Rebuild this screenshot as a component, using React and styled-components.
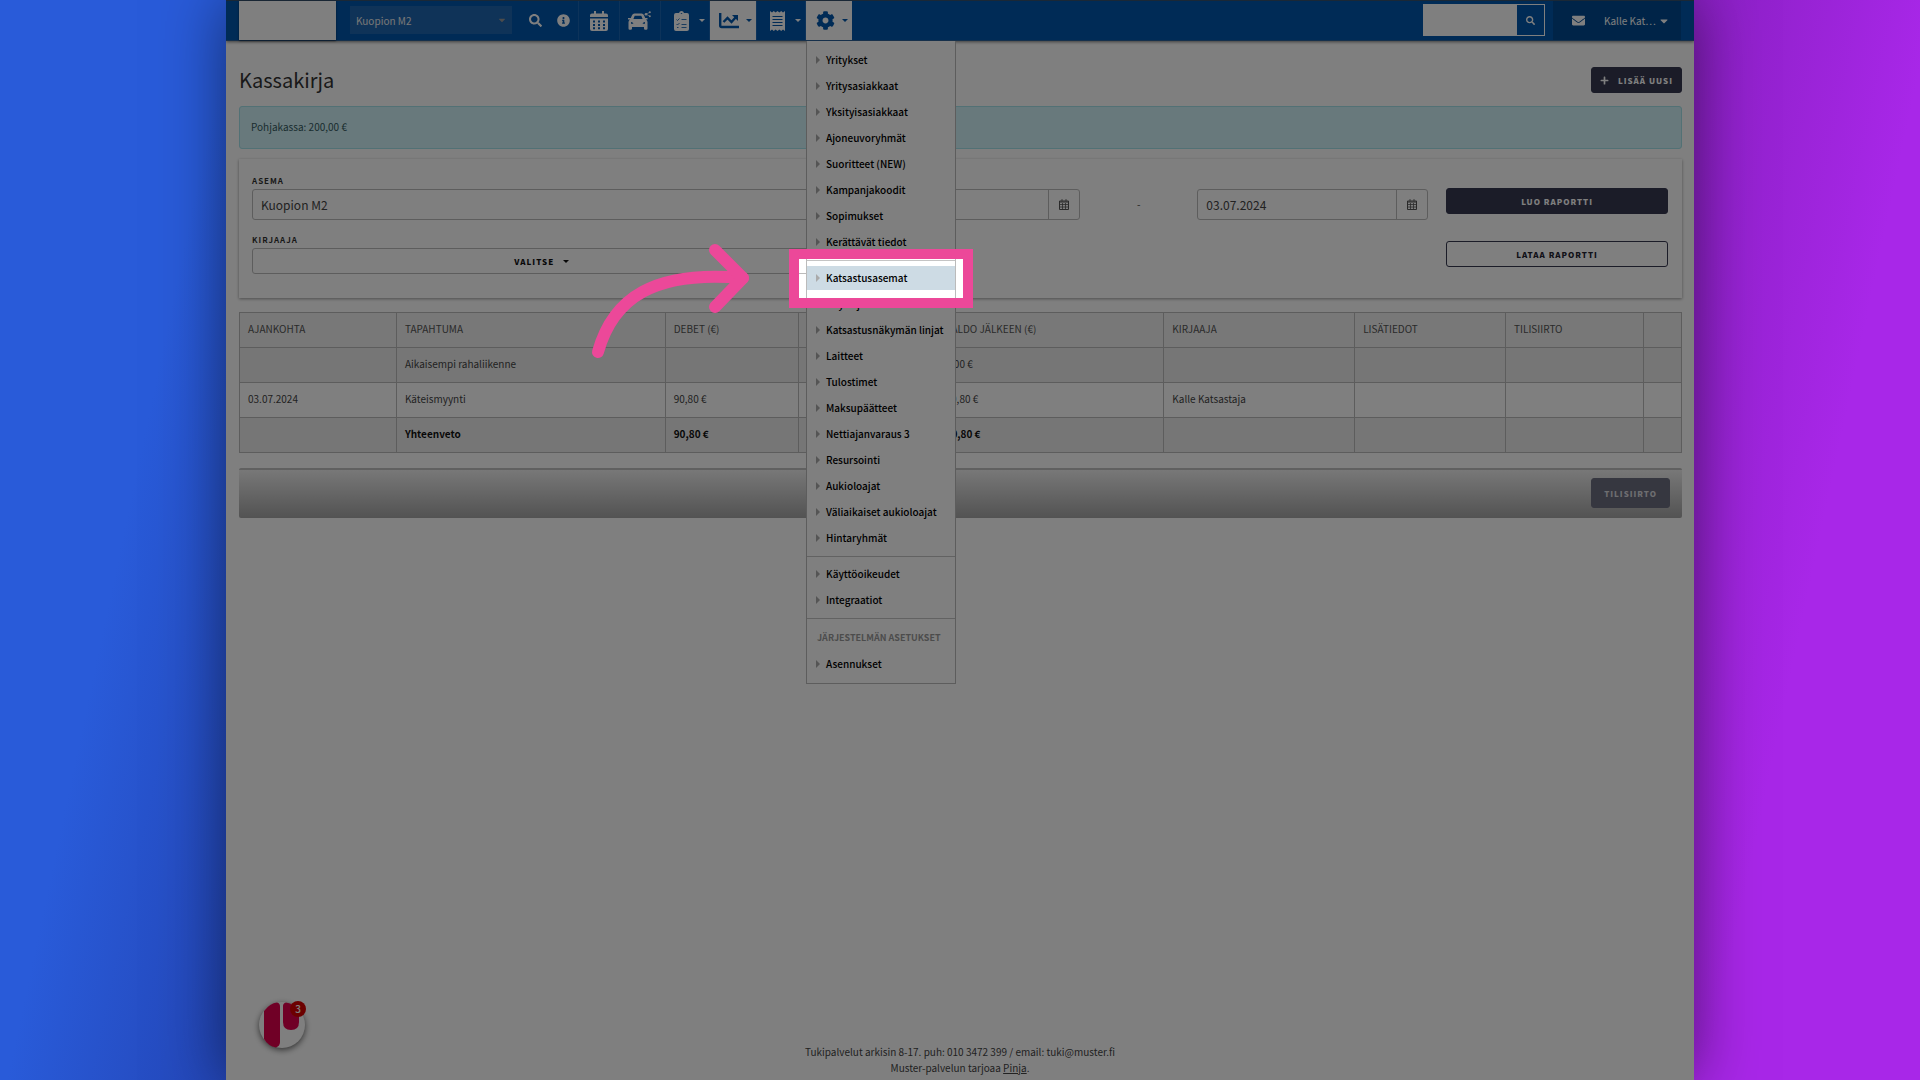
import { useId } from "react";
import styled, { createGlobalStyle, css } from "styled-components";
import {
  FaCaretDown,
  FaCog,
  FaEnvelope,
  FaInfoCircle,
  FaPlus,
  FaSearch,
} from "react-icons/fa";

const GlobalStyle = createGlobalStyle`
  *, *::before, *::after {
    box-sizing: border-box;
  }

  body {
    margin: 0;
    font-family: "Noto Sans CJK JP", "Open Sans", sans-serif;
    font-size: 10px;
    line-height: 16px;
    color: #444;
  }

  button, input, select {
    font-family: inherit;
  }
`;

const Backdrop = styled.div`
  min-height: 100vh;
  display: flex;
  padding: 0 226px;
  overflow: hidden;
  background: linear-gradient(102deg, #295bd9 11%, #2344b4 22%, #8a20c4 79%, #a827e8 90%);
`;

const Shade = styled.div`
  flex: 1;
  min-width: 0;
  display: flex;
  box-shadow: 0 0 60px rgba(0, 0, 0, 0.5);
`;

const Frame = styled.div`
  position: relative;
  flex: 1;
  min-width: 0;
  display: flex;
  flex-direction: column;
  overflow: hidden;
  background: #fff;
`;

const Navbar = styled.header`
  display: flex;
  height: 41px;
  padding: 0 13px;
  background: #0056ac;
  border-top: 1px solid #34506c;
  border-bottom: 1px solid #2c6096;
  box-shadow: 0 1px 3px rgba(0, 0, 0, 0.5);
`;

const Logo = styled.div`
  width: 97px;
  margin-right: 14px;
  background: #fff;
  box-shadow: 0 1px 2px rgba(0, 0, 0, 0.5);
`;

const StationPicker = styled.div`
  position: relative;
  width: 162px;
  height: 28px;
  margin: 5px 10px 0 0;

  select {
    appearance: none;
    width: 100%;
    height: 28px;
    padding: 0 6px;
    border: 0;
    background: #1e66b0;
    color: #eee;
    font-size: 10px;
  }

  svg {
    position: absolute;
    right: 5px;
    top: 9px;
    color: #999;
  }
`;

const IconButton = styled.button`
  display: flex;
  align-items: center;
  justify-content: center;
  width: ${({ $width }) => $width}px;
  padding: 0;
  border: 0;
  background: none;
  color: #fff;
`;

const NavItem = styled(IconButton)`
  border-left: 1px solid #1a66b4;

  ${({ $menu }) =>
    $menu &&
    css`
      justify-content: flex-end;
      gap: 10px;
      padding-right: 4px;
    `}

  ${({ $active }) =>
    $active &&
    css`
      gap: 7px;
      background: #fff;
      color: #0056ac;
    `}
`;

const Triangle = styled.span`
  border: 3px solid transparent;
  border-top-color: currentColor;
  border-bottom: 0;
`;

const SearchForm = styled.form`
  display: flex;
  width: 122px;
  height: 32px;
  margin: 3px 8px 0 auto;
  border: 1px solid #fff;

  input {
    flex: 1;
    min-width: 0;
    border: 0;
    padding: 0 6px;
    background: #fff;
  }
`;

const UserArea = styled.div`
  display: flex;
  align-items: center;
  width: 128px;
  padding-left: 19px;
  background: #004890;
  color: #fff;
`;

const UserButton = styled.button`
  display: flex;
  align-items: center;
  gap: 2px;
  margin-left: 19px;
  padding: 0;
  border: 0;
  background: none;
  color: #fff;
  font-size: 10px;
`;

const Content = styled.main`
  flex: 1;
  padding: 26px 12px 0 13px;
`;

const TitleRow = styled.div`
  display: flex;
  align-items: center;
  justify-content: space-between;
  height: 26px;
  margin-bottom: 13px;
`;

const Title = styled.h1`
  margin: 0;
  font-size: 20px;
  line-height: 26px;
  font-weight: 400;
  color: #333;
`;

const Button = styled.button`
  display: flex;
  align-items: center;
  justify-content: center;
  gap: 9px;
  height: ${({ $tall }) => ($tall ? 30 : 26)}px;
  padding: 0 ${({ $tall }) => ($tall ? 12 : 8)}px;
  border: 1px solid #363850;
  border-radius: 3px;
  background: ${({ $outline }) => ($outline ? "#fff" : "#363850")};
  color: ${({ $outline }) => ($outline ? "#222230" : "#fff")};
  font-size: 8px;
  font-weight: 900;
  letter-spacing: 1px;
  white-space: nowrap;

  &:disabled {
    border-color: #6c6e80;
    background: #6c6e80;
    color: #dcdce0;
  }
`;

const Alert = styled.div`
  padding: 11px 11px 13px;
  border: 1px solid #a4e2ea;
  border-radius: 3px;
  background: #d0f2f8;
  color: #355a60;
  line-height: 17px;
`;

const Filters = styled.form`
  display: grid;
  grid-template-columns: 580fr 231fr 81px 231fr 222fr;
  column-gap: 18px;
  row-gap: 12px;
  margin-top: 10px;
  padding: 14px 14px 24px 13px;
  box-shadow: 0 1px 3px rgba(0, 0, 0, 0.4);
`;

const Field = styled.div`
  display: flex;
  flex-direction: column;

  label {
    height: 16px;
    color: #333;
    font-size: 8px;
    font-weight: 700;
    letter-spacing: 1px;
  }
`;

const controlBorder = css`
  border: 1px solid #bbb;
  border-radius: 3px;
`;

const StationSelect = styled.select`
  ${controlBorder}
  appearance: none;
  height: 31px;
  padding: 0 8px 1px;
  background: #fff;
  color: #444;
  font-size: 12px;
`;

const Dropdown = styled.button`
  ${controlBorder}
  display: flex;
  align-items: center;
  justify-content: center;
  gap: 9px;
  height: 26px;
  background: #fff;
  color: #111;
  font-size: 8px;
  font-weight: 900;
  letter-spacing: 1px;
`;

const DateGroup = styled.div`
  ${controlBorder}
  display: flex;
  height: 31px;
  margin-top: 16px;

  input {
    flex: 1;
    min-width: 0;
    padding: 0 8px 1px;
    border: 0;
    background: none;
    color: #444;
    font-size: 12px;
  }

  button {
    width: 31px;
    padding: 0;
    border: 0;
    border-left: 1px solid #bbb;
    background: none;
    color: #555;
  }
`;

const Dash = styled.span`
  margin-top: 23px;
  text-align: center;
`;

const Actions = styled.div`
  grid-column: 5;
  display: flex;
  flex-direction: column;
  padding-top: ${({ $lower }) => ($lower ? 9 : 15)}px;
`;

const Table = styled.table`
  width: 100%;
  margin-top: 14px;
  border-collapse: collapse;
  table-layout: fixed;

  th, td {
    height: 35px;
    padding: 0 8px 2px;
    border: 1px solid #bbb;
    text-align: left;
    font-weight: 400;
    white-space: nowrap;
  }

  th {
    background: #f0f0f0;
    color: #555;
  }
`;

const Row = styled.tr`
  background: ${({ $shaded }) => ($shaded ? "#ededed" : "#fff")};

  && td {
    font-weight: ${({ $total }) => ($total ? 700 : 400)};
    color: ${({ $total }) => ($total ? "#111" : "#444")};
  }
`;

const ActionBar = styled.div`
  display: flex;
  justify-content: flex-end;
  margin-top: 15px;
  padding: 8px 12px 10px;
  border-top: 2px solid #c0c0c0;
  border-radius: 2px;
  background: linear-gradient(#f0f0f0, #a6a6a6);
`;

const Footer = styled.footer`
  padding-bottom: 4px;
  text-align: center;
  color: #444;

  a {
    color: inherit;
  }
`;

const Menu = styled.nav`
  position: absolute;
  top: 41px;
  left: 580px;
  width: 150px;
  padding: 6px 0;
  border: 1px solid #bbb;
  border-top: 0;
  background: #fff;

  ul {
    margin: 0;
    padding: 0;
    list-style: none;
  }

  ul + ul {
    margin-top: 5px;
    padding-top: 4px;
    border-top: 1px solid #c4c4c4;
  }
`;

const MenuItem = styled.li`
  padding: 1px 0;
`;

const MenuLink = styled.a`
  display: flex;
  align-items: center;
  gap: 6px;
  height: 24px;
  padding-left: 9px;
  background: ${({ $current }) => ($current ? "#cddbe4" : "none")};
  color: #000;
  font-weight: 500;
  text-decoration: none;
  white-space: nowrap;

  &::before {
    content: "";
    border: 4px solid transparent;
    border-left: 4px solid #aaa;
    border-right: 0;
  }
`;

const MenuHeading = styled.li`
  padding: 7px 0 5px 10px;
  color: #999;
  font-size: 9px;
  font-weight: 700;
  white-space: nowrap;
`;

const Spotlight = styled.div`
  position: absolute;
  top: 249px;
  left: 563px;
  width: 184px;
  height: 59px;
  border: 10px solid #ec4899;
  box-shadow: 0 0 0 3000px rgba(0, 0, 0, 0.5);
  pointer-events: none;
`;

const Arrow = styled.svg`
  position: absolute;
  top: 240px;
  left: 360px;
  width: 170px;
  height: 125px;
  fill: none;
  stroke: #ec4899;
  stroke-linecap: round;
  stroke-linejoin: round;
  pointer-events: none;
`;

const ChatButton = styled.button`
  position: absolute;
  left: 33px;
  bottom: 32px;
  width: 46px;
  height: 46px;
  padding: 0;
  border: 0;
  border-radius: 50%;
  background: #fff;
  box-shadow: 0 2px 6px rgba(0, 0, 0, 0.6);
`;

const ChatCount = styled.span`
  position: absolute;
  top: -1px;
  right: -1px;
  width: 16px;
  height: 16px;
  border-radius: 50%;
  background: #d80000;
  color: #fff;
  font-size: 10px;
  font-weight: 500;
  line-height: 15px;
`;

const menuGroups = [
  [
    "Yritykset",
    "Yritysasiakkaat",
    "Yksityisasiakkaat",
    "Ajoneuvoryhmät",
    "Suoritteet (NEW)",
    "Kampanjakoodit",
    "Sopimukset",
    "Kerättävät tiedot",
  ],
  [
    "Katsastusasemat",
    "Käyttäjät",
    "Katsastusnäkymän linjat",
    "Laitteet",
    "Tulostimet",
    "Maksupäätteet",
    "Nettiajanvaraus 3",
    "Resursointi",
    "Aukioloajat",
    "Väliaikaiset aukioloajat",
    "Hintaryhmät",
  ],
  ["Käyttöoikeudet", "Integraatiot"],
];

const columns = [
  { name: "AJANKOHTA", width: 157 },
  { name: "TAPAHTUMA", width: 269 },
  { name: "DEBET (€)", width: 133 },
  { name: "", width: 139 },
  { name: "SALDO JÄLKEEN (€)", width: 227 },
  { name: "KIRJAAJA", width: 191 },
  { name: "LISÄTIEDOT", width: 151 },
  { name: "TILISIIRTO", width: 138 },
  { name: "", width: 38 },
];

const rows = [
  { cells: ["", "Aikaisempi rahaliikenne", "", "", "0,00 €", "", "", "", ""], shaded: true },
  { cells: ["03.07.2024", "Käteismyynti", "90,80 €", "", "90,80 €", "Kalle Katsastaja", "", "", ""] },
  { cells: ["", "Yhteenveto", "90,80 €", "", "90,80 €", "", "", "", ""], shaded: true, total: true },
];

const totalWidth = columns.reduce((sum, column) => sum + column.width, 0);

const CalendarIcon = () => (
  <svg width="18" height="20" viewBox="0 0 18 20" fill="currentColor">
    <path
      fillRule="evenodd"
      d="M4 0h2v2.500h6V0h2v2.500h2q2 0 2 2V6H0V4.500q0-2 2-2h2zM0 7.500h18V18q0 2-2 2H2q-2 0-2-2zM3 9.500v2h2v-2zm5 0v2h2v-2zm5 0v2h2v-2zM3 13v2h2v-2zm5 0v2h2v-2zm5 0v2h2v-2zM3 16.300v2h2v-2zm5 0v2h2v-2zm5 0v2h2v-2z"
    />
  </svg>
);

const CarIcon = () => (
  <svg width="24" height="20" viewBox="0 0 24 20" fill="currentColor">
    <path
      fillRule="evenodd"
      d="M6.500 2.500h7q1.800 0 2.500 1.700L17.200 7h2.300v1.500H18q1.500 1 1.500 2.500v6.500q0 1.300-1.200 1.300h-1.100q-1.200 0-1.200-1.300V16H4v1.500q0 1.300-1.300 1.300H1.600Q.5 18.800.5 17.500V11q0-1.500 1.500-2.500H0V7h2.800L4 4.200Q4.700 2.500 6.500 2.500zm.2 2.300L5.400 8h9.200l-1.300-3.200zM3 11v1.800h2.500Q5 11 3 11zm14 0q-2 0-2.500 1.800H17z"
    />
    <circle cx="18" cy="3.200" r="1.300" />
    <circle cx="21.800" cy="1.300" r="1" />
    <circle cx="21.800" cy="5.200" r="1" />
    <path d="M18 3.200l3.800-1.900M18 3.200l3.800 2" stroke="currentColor" strokeWidth=".6" />
  </svg>
);

const ClipboardIcon = () => (
  <svg width="15" height="20" viewBox="0 0 15 20">
    <path
      fill="currentColor"
      d="M2 2h3q.5-2 2.500-2T10 2h3q2 0 2 2v14q0 2-2 2H2q-2 0-2-2V4q0-2 2-2z"
    />
    <path
      d="M2.500 8.500l1 1 2-2M7.500 8.500h5M2.500 13l1 1 2-2M7.500 13.500h5M7.500 16.500h5M3 16.500h1.500M6.800 2.500h1.400"
      fill="none"
      stroke="#0056ac"
      strokeWidth=".8"
    />
  </svg>
);

const ChartIcon = () => (
  <svg width="20" height="16" viewBox="0 0 20 16" fill="none" stroke="currentColor" strokeWidth="2.400">
    <path d="M1.200 0v12.500q0 1.500 1.500 1.500H20" />
    <path d="M4.500 9l4-4 4 4L17 4" />
    <path d="M13 2h6v6z" fill="currentColor" stroke="none" />
  </svg>
);

const ReceiptIcon = () => (
  <svg width="15" height="20" viewBox="0 0 15 20">
    <path
      fill="currentColor"
      d="M0 0l2 1.500L3.800 0l1.800 1.500L7.500 0l1.900 1.500L11.200 0 13 1.500 15 0v20l-2-1.500-1.800 1.500-1.800-1.500L7.500 20l-1.900-1.500L3.800 20 2 18.500 0 20z"
    />
    <path d="M2.500 5.500h10M2.500 8.500h10M2.500 11.500h10M2.500 14.500h10" stroke="#0056ac" strokeWidth="1.200" />
  </svg>
);

const SmallCalendarIcon = () => (
  <svg width="10" height="11" viewBox="0 0 10 11" fill="none" stroke="currentColor">
    <path d="M.5 2h9v8.500h-9zM.5 3h9" />
    <path d="M.5 5.500h9M.5 8h9M3.500 4v6M6.500 4v6M3 0v2.500M7 0v2.500" strokeWidth=".8" />
  </svg>
);

const MenuEntry = ({ name, current }) => (
  <MenuItem>
    <MenuLink href="#" $current={current}>
      {name}
    </MenuLink>
  </MenuItem>
);

const DateInput = ({ label, value }) => (
  <DateGroup>
    <input type="text" aria-label={label} defaultValue={value} />
    <button type="button" aria-label="Kalenteri">
      <SmallCalendarIcon />
    </button>
  </DateGroup>
);

const TopBar = () => (
  <Navbar>
    <Logo />
    <StationPicker>
      <select aria-label="Asema">
        <option>Kuopion M2</option>
      </select>
      <FaCaretDown size={10} />
    </StationPicker>
    <IconButton $width={26} aria-label="Haku">
      <FaSearch size={13} />
    </IconButton>
    <IconButton $width={30} aria-label="Info">
      <FaInfoCircle size={13} />
    </IconButton>
    <NavItem $width={41} aria-label="Kalenteri">
      <CalendarIcon />
    </NavItem>
    <NavItem $width={41} aria-label="Ajoneuvot">
      <CarIcon />
    </NavItem>
    <NavItem $width={49} $menu aria-label="Tehtävät">
      <ClipboardIcon />
      <Triangle />
    </NavItem>
    <NavItem $width={47} $menu $active aria-label="Raportit">
      <ChartIcon />
      <Triangle />
    </NavItem>
    <NavItem $width={49} $menu aria-label="Kuitit">
      <ReceiptIcon />
      <Triangle />
    </NavItem>
    <NavItem $width={47} $menu $active aria-label="Asetukset">
      <FaCog size={19} />
      <Triangle />
    </NavItem>
    <SearchForm>
      <input type="text" aria-label="Haku" />
      <IconButton $width={27} type="button" aria-label="Hae">
        <FaSearch size={9} />
      </IconButton>
    </SearchForm>
    <UserArea>
      <FaEnvelope size={13} />
      <UserButton>
        Kalle Kat…
        <FaCaretDown size={12} />
      </UserButton>
    </UserArea>
  </Navbar>
);

const App = () => {
  const stationId = useId();
  const clerkId = useId();

  return (
    <>
      <GlobalStyle />
      <Backdrop>
        <Shade>
          <Frame>
            <TopBar />
            <Content>
              <TitleRow>
                <Title>Kassakirja</Title>
                <Button>
                  <FaPlus size={9} />
                  LISÄÄ UUSI
                </Button>
              </TitleRow>
              <Alert>Pohjakassa: 200,00 €</Alert>
              <Filters>
                <Field>
                  <label htmlFor={stationId}>ASEMA</label>
                  <StationSelect id={stationId}>
                    <option>Kuopion M2</option>
                  </StationSelect>
                </Field>
                <DateInput label="Alkaen" value="" />
                <Dash>-</Dash>
                <DateInput label="Asti" value="03.07.2024" />
                <Actions>
                  <Button type="button">LUO RAPORTTI</Button>
                </Actions>
                <Field>
                  <label htmlFor={clerkId}>KIRJAAJA</label>
                  <Dropdown id={clerkId} type="button">
                    VALITSE
                    <Triangle />
                  </Dropdown>
                </Field>
                <Actions $lower>
                  <Button type="button" $outline>
                    LATAA RAPORTTI
                  </Button>
                </Actions>
              </Filters>
              <Table>
                <colgroup>
                  {columns.map((column, index) => (
                    <col key={index} style={{ width: `${(column.width / totalWidth) * 100}%` }} />
                  ))}
                </colgroup>
                <thead>
                  <tr>
                    {columns.map((column, index) => (
                      <th key={index}>{column.name}</th>
                    ))}
                  </tr>
                </thead>
                <tbody>
                  {rows.map((row) => (
                    <Row key={row.cells[1]} $shaded={row.shaded} $total={row.total}>
                      {row.cells.map((cell, index) => (
                        <td key={index}>{cell}</td>
                      ))}
                    </Row>
                  ))}
                </tbody>
              </Table>
              <ActionBar>
                <Button $tall disabled>
                  TILISIIRTO
                </Button>
              </ActionBar>
            </Content>
            <Footer>
              Tukipalvelut arkisin 8-17. puh: 010 3472 399 / email: tuki@muster.fi
              <br />
              Muster-palvelun tarjoaa <a href="#">Pinja</a>.
            </Footer>

            <Menu>
              {menuGroups.map((group) => (
                <ul key={group[0]}>
                  {group.map((name) => (
                    <MenuEntry key={name} name={name} current={name === "Katsastusasemat"} />
                  ))}
                </ul>
              ))}
              <ul>
                <MenuHeading>JÄRJESTELMÄN ASETUKSET</MenuHeading>
                <MenuEntry name="Asennukset" />
              </ul>
            </Menu>

            <ChatButton aria-label="Chat">
              <svg width="46" height="46" viewBox="0 0 46 46" fill="#e0004d">
                <path d="M5 9Q11 1 18 .5q3 .5 3 4V40q0 4-4 5.500Q9 44 5 37z" />
                <path d="M24 4q0-3 3-3.500Q36 2 40 9v11q0 8-8 8t-8-8z" />
              </svg>
              <ChatCount>3</ChatCount>
            </ChatButton>

            <Spotlight />
            <Arrow viewBox="0 0 170 125">
              <path d="M12 112C27 58 68 30 157 38" strokeWidth="12" />
              <path d="M129 10l28 28-28 29" strokeWidth="12" />
            </Arrow>
          </Frame>
        </Shade>
      </Backdrop>
    </>
  );
};

export default App;
